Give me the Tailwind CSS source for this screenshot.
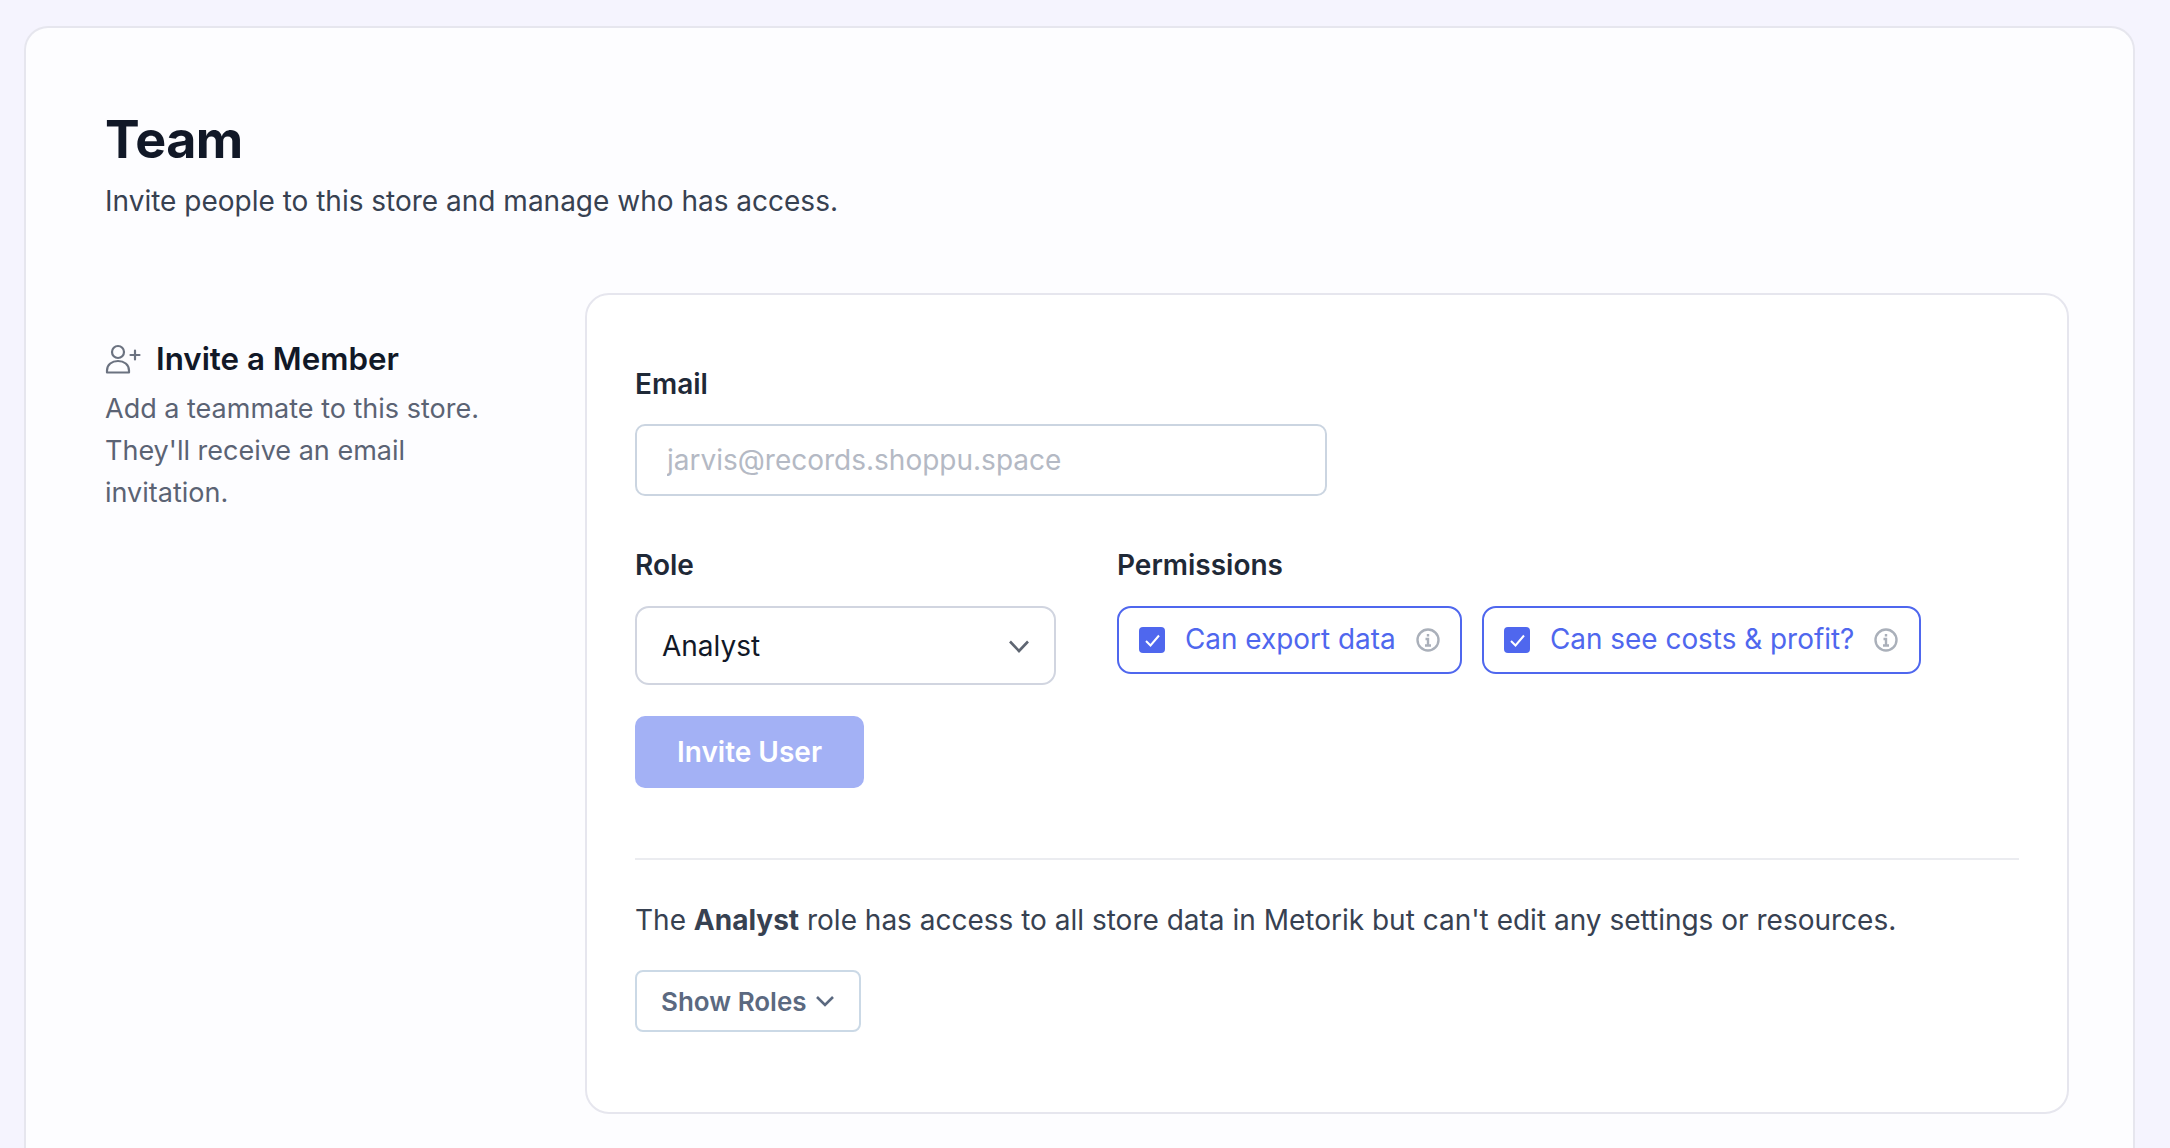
<!DOCTYPE html>
<html lang="en">
<head>
<meta charset="UTF-8"/>
<title>Team</title>
<script src="https://cdn.jsdelivr.net/npm/@tailwindcss/browser@4"></script>
</head>
<body class="bg-[#f5f4fe] font-['Inter',sans-serif] h-[1148px] overflow-hidden">

<!-- page card -->
<div class="ml-[24px] mr-[35px] mt-[26px] h-[1122px] bg-[#fdfdff] border-2 border-b-0 border-[#e6e6ee] rounded-t-[24px] pt-[84px] pl-[79px] pr-[64px]">
  <h1 class="text-[52px] leading-[56px] font-bold text-[#111827] tracking-[-0.5px]">Team</h1>
  <p class="mt-[13px] text-[28px] leading-[40px] text-[#374151]">Invite people to this store and manage who has access.</p>

  <div class="mt-[72px] flex">
    <!-- left column -->
    <div class="w-[480px] shrink-0 pt-[46px]">
      <div class="flex items-center gap-[14px]">
        <svg class="w-[37px] h-[30px] text-[#6b7280]" viewBox="0 0 37 30" fill="none" stroke="currentColor" stroke-width="2.200" stroke-linecap="round" stroke-linejoin="round">
          <circle cx="13" cy="8" r="6"/>
          <path d="M2 28.500v-2c0-6 5-9.500 11-9.500s11 3.500 11 9.500v2z"/>
          <path d="M30 6.500v9M25.500 11h9"/>
        </svg>
        <h2 class="text-[31.300px] leading-[40px] font-semibold text-[#111827]">Invite a Member</h2>
      </div>
      <p class="mt-[9px] text-[27px] leading-[42px] text-[#5b6374] w-[400px]">Add a teammate to this store. They'll receive an email invitation.</p>
    </div>

    <!-- invite form -->
    <div class="w-[1484px] h-[821px] shrink-0 bg-white border-2 border-[#e6e6ee] rounded-[24px] pt-[71px] px-[48px]">
      <label class="block text-[28px] leading-[36px] font-semibold text-[#1f2937]">Email</label>
      <input class="mt-[22px] block w-[692px] h-[72px] border-2 border-[#cbd5e1] rounded-[10px] px-[30px] text-[28px] bg-white placeholder:text-[#b4b9c4]" placeholder="jarvis@records.shoppu.space"/>

      <div class="mt-[51px] flex">
        <div class="w-[482px] shrink-0">
          <div class="text-[28px] leading-[36px] font-semibold text-[#1f2937]">Role</div>
          <div class="mt-[23px] w-[421px] h-[79px] border-2 border-[#d1d5e0] rounded-[14px] pl-[25px] pr-[23px] flex items-center justify-between text-[28px] text-[#111827]">
            Analyst
            <svg class="w-[24px] h-[24px] text-[#5f6672]" viewBox="0 0 24 24" fill="none" stroke="currentColor" stroke-width="2.6"><path d="M3 7.500l9 9.500 9-9.500"/></svg>
          </div>
        </div>
        <div>
          <div class="text-[28px] leading-[36px] font-semibold text-[#1f2937]">Permissions</div>
          <div class="mt-[23px] flex gap-[20px]">
            <div class="h-[68px] w-[345px] border-2 border-[#4f67ee] rounded-[14px] pl-[20px] flex items-center text-[27.900px] text-[#4f67ee]">
              <svg class="w-[26px] h-[26px] mr-[20px]" viewBox="0 0 26 26"><rect width="26" height="26" rx="4" fill="#4f67ee"/><path d="M7 14l4.500 4.500L20 8.500" fill="none" stroke="#fff" stroke-width="2"/></svg>
              Can export data
              <svg class="w-[24px] h-[24px] ml-[20px] text-[#aab0ba]" viewBox="0 0 24 24" fill="none" stroke="currentColor" stroke-width="2.400"><circle cx="12" cy="12" r="10.500"/><path d="M9.500 11h2.500v6M9 17.500h6M12 6v2.500"/></svg>
            </div>
            <div class="h-[68px] w-[439px] border-2 border-[#4f67ee] rounded-[14px] pl-[20px] flex items-center text-[27.900px] text-[#4f67ee]">
              <svg class="w-[26px] h-[26px] mr-[20px]" viewBox="0 0 26 26"><rect width="26" height="26" rx="4" fill="#4f67ee"/><path d="M7 14l4.500 4.500L20 8.500" fill="none" stroke="#fff" stroke-width="2"/></svg>
              Can see costs &amp; profit?
              <svg class="w-[24px] h-[24px] ml-[20px] text-[#aab0ba]" viewBox="0 0 24 24" fill="none" stroke="currentColor" stroke-width="2.400"><circle cx="12" cy="12" r="10.500"/><path d="M9.500 11h2.500v6M9 17.500h6M12 6v2.500"/></svg>
            </div>
          </div>
        </div>
      </div>

      <button class="mt-[31px] block w-[229px] h-[72px] rounded-[10px] bg-[#a3b1f5] text-white text-[28px] font-semibold">Invite User</button>

      <hr class="mt-[70px] border-t-2 border-[#ebecf0]"/>

      <p class="mt-[40px] text-[28px] leading-[40px] text-[#374151]">The <b class="font-bold">Analyst</b> role has access to all store data in Metorik but can't edit any settings or resources.</p>

      <button class="mt-[30px] flex items-center gap-[8px] w-[226px] h-[62px] border-2 border-[#cbd9e6] rounded-[8px] pl-[24px] text-[26px] font-semibold text-[#5b6980]">
        Show Roles
        <svg class="w-[20px] h-[20px]" viewBox="0 0 20 20" fill="none" stroke="currentColor" stroke-width="2.6"><path d="M2 6l8 8 8-8"/></svg>
      </button>
    </div>
  </div>
</div>

</body>
</html>
